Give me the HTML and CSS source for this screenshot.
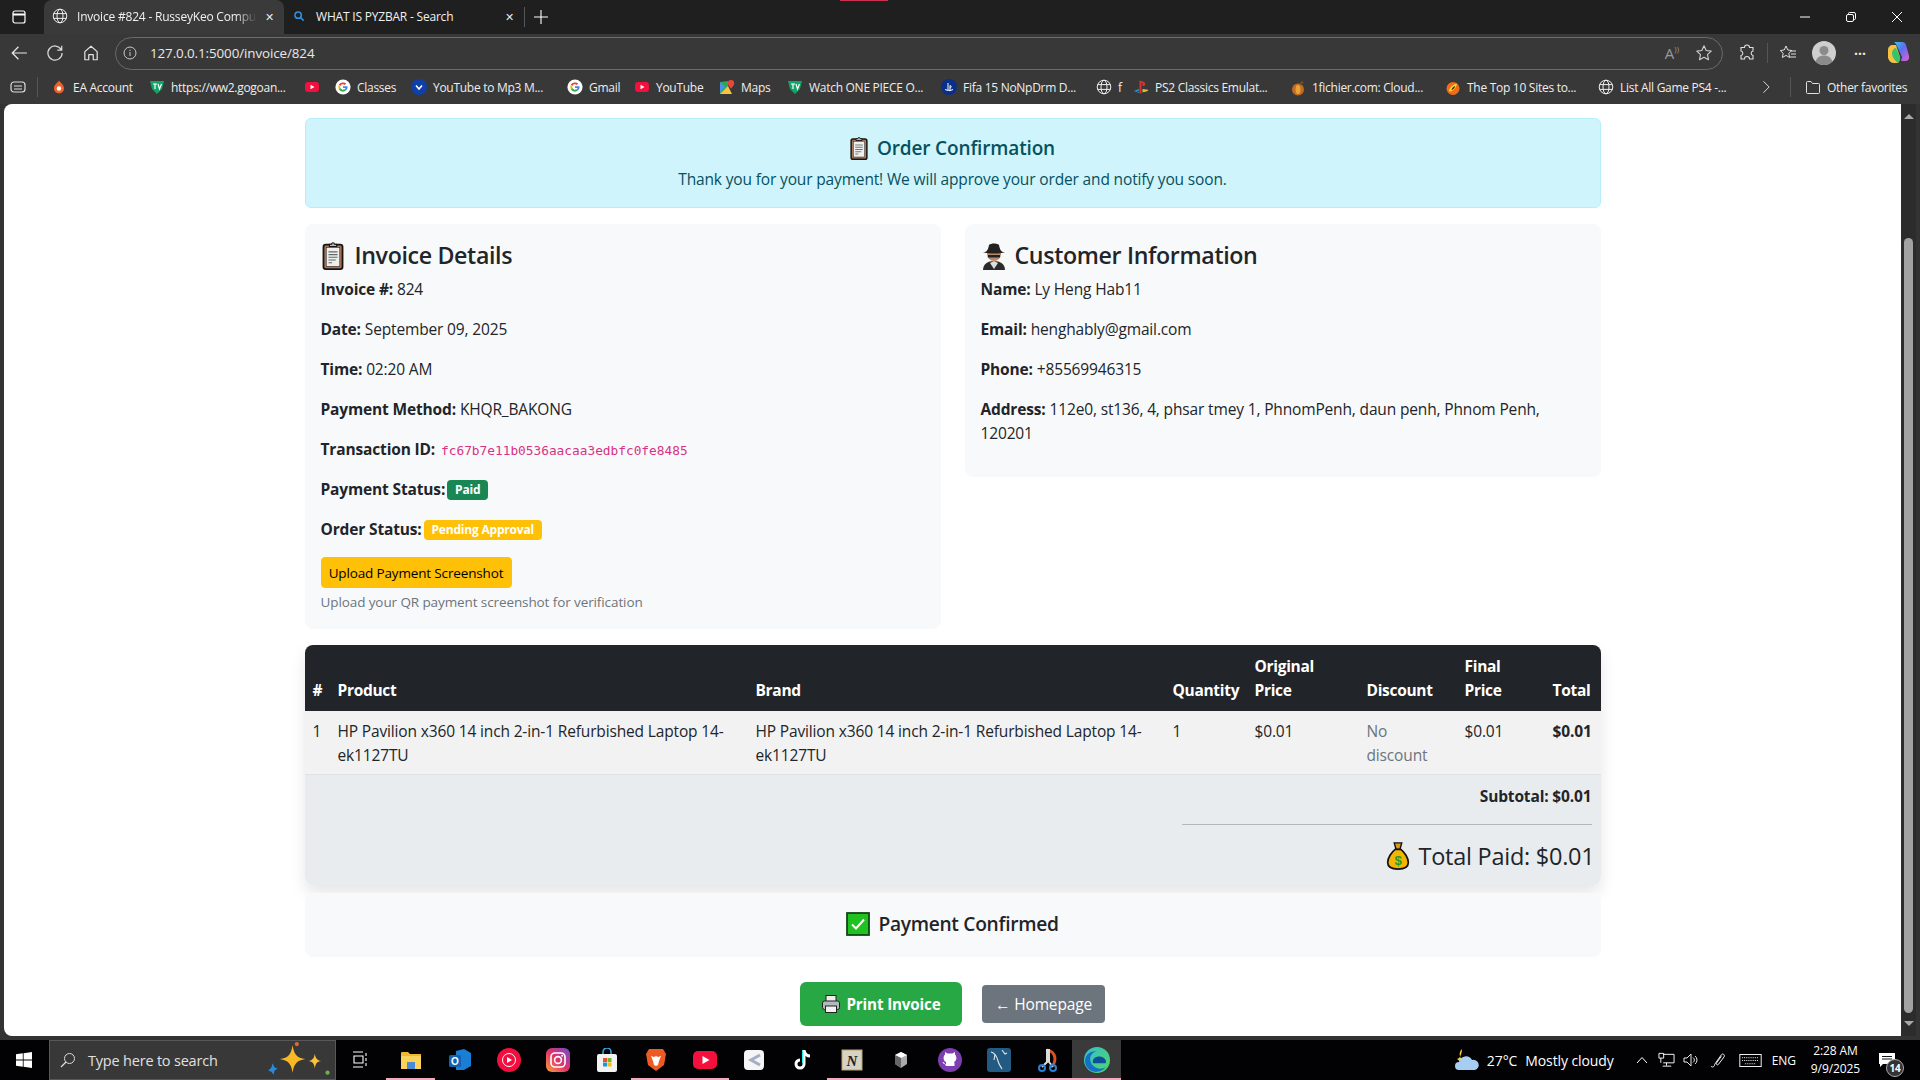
FILE: index.html
```html
<!DOCTYPE html>
<html lang="en">
<head>
    <meta charset="UTF-8">
    <title>Invoice #824 - RusseyKeo Computer</title>
    <link rel="stylesheet" href="styles.css">
</head>
<body>
<svg class="sprite" aria-hidden="true">
    <symbol id="globe" viewBox="0 0 16 16"><g fill="none" stroke="currentColor" stroke-width="1"><circle cx="8" cy="8" r="6.8"/><ellipse cx="8" cy="8" rx="3" ry="6.8"/><path d="M1.6 5.6h12.8M1.6 10.4h12.8"/></g></symbol>
    <symbol id="tv" viewBox="0 0 16 16"><path d="M1 2h14l-2 8-5 5-5-5z" fill="#12a56a"/><path d="M4 5h4M6 5v5M9 5l1.500 5L12.500 5" fill="none" stroke="#fff" stroke-width="1.200"/></symbol>
    <symbol id="yt" viewBox="0 0 16 16"><rect x="1" y="3" width="14" height="10" rx="3" fill="#f40f3d"/><path d="M6.5 5.8v4.4L10.5 8z" fill="#fff"/></symbol>
    <symbol id="goog" viewBox="0 0 16 16"><circle cx="8" cy="8" r="7.6" fill="#fff"/><path d="M8 3.400a4.600 4.600 0 0 1 3.200 1.200L9.800 6A2.700 2.700 0 0 0 5.400 7L3.800 5.800A4.600 4.600 0 0 1 8 3.400z" fill="#ea4335"/><path d="M3.800 5.800 5.400 7a2.800 2.800 0 0 0 0 2L3.800 10.200a4.600 4.600 0 0 1 0-4.400z" fill="#fbbc05"/><path d="M3.800 10.200 5.400 9a2.700 2.700 0 0 0 4 1.300l1.500 1.200A4.600 4.600 0 0 1 3.800 10.200z" fill="#34a853"/><path d="M12.600 7.200H8v1.800h2.600a2.300 2.300 0 0 1-1.200 1.300l1.500 1.200c1.100-1 1.900-2.500 1.700-4.300z" fill="#4285f4"/></symbol>
    <symbol id="clip" viewBox="0 0 24 32"><rect x="1.500" y="4" width="21" height="27" rx="2.500" fill="#a9785a" stroke="#1a1410" stroke-width="2"/><rect x="4.500" y="7" width="15" height="21" fill="#eef0f0" stroke="#1a1410" stroke-width=".6"/><path d="M7 12h10M7 15h10M7 18h10M7 21h8M7 24h4" stroke="#666" stroke-width="1.200"/><path d="M8 6V3.500h2.500a1.500 1.500 0 0 1 3 0H16V6z" fill="#b8bcbf" stroke="#1a1410" stroke-width="1.200"/></symbol>
</svg>

<div class="screen">
    <div class="titlebar">
        <svg class="tab-actions" viewBox="0 0 16 16" width="16" height="16"><rect x="2" y="2" width="12" height="12" rx="2" fill="none" stroke="#fff" stroke-width="1.200"/><path d="M2 5.500h12" stroke="#fff" stroke-width="2"/></svg>
        <div class="tab tab-active">
            <svg class="tab-icon" width="16" height="16"><use href="#globe"/></svg>
            <span class="tab-title">Invoice #824 - RusseyKeo Compu</span>
            <span class="tab-close">✕</span>
        </div>
        <div class="tab">
            <svg class="tab-icon" viewBox="0 0 16 16" width="14" height="14"><circle cx="7" cy="7" r="3.600" fill="none" stroke="#2f8fe0" stroke-width="1.800"/><path d="M9.800 9.800l3.500 3.500" stroke="#2f8fe0" stroke-width="1.800"/></svg>
            <span class="tab-title">WHAT IS PYZBAR - Search</span>
            <span class="tab-close">✕</span>
        </div>
        <span class="tab-sep"></span>
        <svg class="new-tab" viewBox="0 0 16 16" width="16" height="16"><path d="M8 1v14M1 8h14" stroke="#fff" stroke-width="1.100"/></svg>
        <div class="recording"></div>
        <div class="window-btns">
            <svg viewBox="0 0 12 12" width="12" height="12"><path d="M1 6h10" stroke="#fff"/></svg>
            <svg viewBox="0 0 12 12" width="12" height="12"><rect x="1.500" y="3.500" width="7" height="7" rx="1.500" fill="none" stroke="#fff"/><path d="M3.500 3.500V2.500a1 1 0 0 1 1-1h4.500a1.500 1.500 0 0 1 1.500 1.500v4.500a1 1 0 0 1-1 1h-1" fill="none" stroke="#fff"/></svg>
            <svg viewBox="0 0 12 12" width="12" height="12"><path d="M1 1l10 10M11 1L1 11" stroke="#fff"/></svg>
        </div>
    </div>

    <div class="toolbar">
        <svg class="tool" viewBox="0 0 16 16" width="18" height="18"><path d="M15 8H2M7.500 2.500 2 8l5.500 5.500" fill="none" stroke="#e8e8e8" stroke-width="1.100"/></svg>
        <svg class="tool" viewBox="0 0 16 16" width="18" height="18"><path d="M13.500 5A6.300 6.300 0 1 0 14.300 8M14 1.500V5.500h-4" fill="none" stroke="#d8d8d8" stroke-width="1.100"/></svg>
        <svg class="tool" viewBox="0 0 16 16" width="18" height="18"><path d="M2.500 14V6.800L8 2l5.500 4.800V14H10V9.500H6V14z" fill="none" stroke="#e0e0e0" stroke-width="1.100" stroke-linejoin="round"/></svg>
        <div class="address">
            <svg viewBox="0 0 14 14" width="14" height="14"><circle cx="7" cy="7" r="6" fill="none" stroke="#c8c8c8"/><path d="M7 6v4M7 3.800v1.200" stroke="#c8c8c8"/></svg>
            <span class="url">127.0.0.1:5000/invoice/824</span>
            <span class="address-right">
                <span class="read-aloud">A<small>))</small></span>
                <svg viewBox="0 0 18 18" width="18" height="18"><path d="M9 1.800l2.200 4.700 5 .6-3.700 3.500 1 5.100L9 13.200l-4.500 2.500 1-5.100L1.800 7.100l5-.6z" fill="none" stroke="#cfcfcf" stroke-width="1.100" stroke-linejoin="round"/></svg>
            </span>
        </div>
        <svg class="tool-ext" viewBox="0 0 18 18" width="18" height="18"><path d="M6.500 3.500a2.500 2.500 0 0 1 5 0H15v3.500a2.300 2.300 0 0 0 0 4.500V15h-3.500a2.500 2.500 0 0 0-5 0H3v-3.500a2.300 2.300 0 0 0 0-4.500V3.500z" fill="none" stroke="#e0e0e0" stroke-width="1.100"/></svg>
        <span class="tool-sep"></span>
        <svg class="tool-fav" viewBox="0 0 18 18" width="18" height="18"><path d="M7 2l1.800 4 4 .5-3 2.800.8 4.200L7 11.400 3.400 13.500l.8-4.200-3-2.800 4-.5zM12 7h5M12 10h5M11 13h6" fill="none" stroke="#e0e0e0" stroke-width="1"/></svg>
        <svg class="avatar" viewBox="0 0 24 24" width="24" height="24"><circle cx="12" cy="12" r="12" fill="#cfcfcf"/><circle cx="12" cy="9.500" r="4.500" fill="#8b8b8b"/><path d="M3.500 20.500c1.500-4.500 5-6 8.500-6s7 1.500 8.500 6A12 12 0 0 1 3.500 20.500z" fill="#8b8b8b"/></svg>
        <span class="more">···</span>
        <svg class="copilot" viewBox="0 0 24 24" width="24" height="24"><defs><linearGradient id="cop" x1="0" y1="0" x2="1" y2="1"><stop offset="0" stop-color="#36c5e8"/><stop offset=".45" stop-color="#5b6ff0"/><stop offset="1" stop-color="#e85fd0"/></linearGradient></defs><path d="M8 1h8c2 0 3.500 1 4 3l3 11c.5 3-1 5-4 5h-4l1-4-6-13z" fill="url(#cop)"/><path d="M2 9c0-3 2-5 5-5h3l4 12c.5 2-.5 4-2 6H8c-3 0-5-2-6-5z" fill="#f5c242"/><path d="M6 12c0-3 2-5 4-5l4 9c.5 2-.5 4-2 6-3-2-6-6-6-10z" fill="#35c46b"/></svg>
    </div>

    <div class="bookmarks">
        <svg class="bm-collapse" viewBox="0 0 16 16" width="16" height="16"><rect x="1" y="3" width="14" height="10" rx="3" fill="none" stroke="#ddd" stroke-width="1.200"/><path d="M4 7h8M4 10h8" stroke="#ddd"/></svg>
        <span class="bm-sep"></span>
        <span class="bm bm-ea"><svg viewBox="0 0 16 16" width="16" height="17"><path d="M8 1c1 2 5 4 5 8a5 5 0 0 1-10 0c0-4 4-6 5-8z" fill="#f0622a"/><circle cx="8" cy="9" r="2.200" fill="#fff"/></svg>EA Account</span>
        <span class="bm bm-tv"><svg width="16" height="16"><use href="#tv"/></svg>https://ww2.gogoan...</span>
        <span class="bm bm-yt1"><svg width="16" height="16"><use href="#yt"/></svg></span>
        <span class="bm bm-classes"><svg width="16" height="16"><use href="#goog"/></svg>Classes</span>
        <span class="bm bm-mp3"><svg viewBox="0 0 16 16" width="16" height="16"><circle cx="8" cy="8" r="8" fill="#0f3fa8"/><path d="M5 6.500l3 3.500 3-3.500" fill="none" stroke="#fff" stroke-width="1.600"/></svg>YouTube to Mp3 M...</span>
        <span class="bm bm-gmail"><svg width="16" height="16"><use href="#goog"/></svg>Gmail</span>
        <span class="bm bm-yt2"><svg width="16" height="16"><use href="#yt"/></svg>YouTube</span>
        <span class="bm bm-maps"><svg viewBox="0 0 16 16" width="16" height="16"><path d="M1 3l8-1v13l-8 0z" fill="#2fa853"/><path d="M1 15l8-8 4 8z" fill="#f6c343"/><path d="M1 3l5 5-5 5z" fill="#4d90f0"/><path d="M12 1a3.200 3.200 0 0 1 3.200 3.200c0 2.300-3.200 5.300-3.200 5.300S8.800 6.500 8.800 4.200A3.200 3.200 0 0 1 12 1z" fill="#e5493a"/></svg>Maps</span>
        <span class="bm bm-onepiece"><svg width="16" height="16"><use href="#tv"/></svg>Watch ONE PIECE O...</span>
        <span class="bm bm-fifa"><svg viewBox="0 0 16 16" width="16" height="16"><circle cx="8" cy="8" r="8" fill="#0a2f8a"/><path d="M7 4v7l2 .8V6.500c1.500 0 1.500 2.500 0 2.300M4 10.500l3 1M12 10.500l-3 1" fill="none" stroke="#fff"/></svg>Fifa 15 NoNpDrm D...</span>
        <span class="bm bm-f"><svg width="16" height="16"><use href="#globe"/></svg>f</span>
        <span class="bm bm-ps2"><svg viewBox="0 0 16 16" width="16" height="16"><path d="M6.500 1.500l4 1.200c2.500.8 2.500 5-1 4.300V4L8.500 3.700v11l-2-.7z" fill="#d8352b"/><path d="M1 12l5-2v1.500l-3 1 3 .5v1z" fill="#2e9bd8"/><path d="M9.500 10l5.500.8c.8.8-1 2-5.500 2.500z" fill="#e8b931"/></svg>PS2 Classics Emulat...</span>
        <span class="bm bm-1f"><svg viewBox="0 0 16 16" width="16" height="17"><ellipse cx="8" cy="10" rx="6" ry="6" fill="#c56a1f"/><ellipse cx="8" cy="10" rx="2.500" ry="4.500" fill="#e9a23a"/><path d="M10 5l3-3" stroke="#7a4a20" stroke-width="2"/></svg>1fichier.com: Cloud...</span>
        <span class="bm bm-top10"><svg viewBox="0 0 16 16" width="16" height="17"><circle cx="8" cy="9" r="6.500" fill="#ef6c1a"/><path d="M4 12c0-4 4-7 8-8-1 4-3 8-8 8z" fill="#ffd22e"/><path d="M6.500 10.500c.5-2 2-3.500 3.500-4-.3 2-1.500 3.500-3.500 4z" fill="#3a2500"/></svg>The Top 10 Sites to...</span>
        <span class="bm bm-ps4"><svg width="16" height="16"><use href="#globe"/></svg>List All Game PS4 -...</span>
        <svg class="bm-chevron" viewBox="0 0 10 16" width="9" height="14"><path d="M1.500 1.500 8 8l-6.500 6.500" fill="none" stroke="#ddd" stroke-width="1.100"/></svg>
        <span class="bm-sep bm-sep-right"></span>
        <span class="bm bm-other"><svg viewBox="0 0 16 16" width="16" height="16"><path d="M1.500 13.500V3.500a1 1 0 0 1 1-1h3.500l1.500 2h6a1 1 0 0 1 1 1v8a1 1 0 0 1-1 1h-11a1 1 0 0 1-1-1z" fill="none" stroke="#e0e0e0"/></svg>Other favorites</span>
    </div>

    <div class="viewport">
        <main class="page">
            <div class="container">
                <div class="alert">
                    <h5 class="alert-title"><svg class="emoji-sm" width="18" height="24"><use href="#clip"/></svg> Order Confirmation</h5>
                    <p>Thank you for your payment! We will approve your order and notify you soon.</p>
                </div>

                <div class="info-row">
                    <section class="card">
                        <h4 class="h-invoice"><svg class="emoji" width="24" height="29"><use href="#clip"/></svg> Invoice Details</h4>
                        <p><b>Invoice #:</b> 824</p>
                        <p><b>Date:</b> September 09, 2025</p>
                        <p><b>Time:</b> 02:20 AM</p>
                        <p><b>Payment Method:</b> KHQR_BAKONG</p>
                        <p><b>Transaction ID:</b> <code>fc67b7e11b0536aacaa3edbfc0fe8485</code></p>
                        <p><b>Payment Status:</b> <span class="badge badge-paid">Paid</span></p>
                        <p><b>Order Status:</b> <span class="badge badge-pending">Pending Approval</span></p>
                        <button class="btn-upload">Upload Payment Screenshot</button>
                        <div class="form-text">Upload your QR payment screenshot for verification</div>
                    </section>
                    <section class="card card-customer">
                        <h4><svg class="emoji" viewBox="0 0 26 28" width="26" height="28"><path d="M2 28c0-6 5-9 11-9s11 3 11 9z" fill="#2b2b2b"/><path d="M13 19l-4 2 4 6 4-6z" fill="#ddd"/><circle cx="13" cy="12" r="7" fill="#b98a6a"/><path d="M2 10c3 .5 5-1 6-7 2-2 8-2 10 0 1 6 3 7.500 6 7-5 2-17 2-22 0z" fill="#222"/><path d="M7 13h12v2.500H7z" fill="#222"/></svg> Customer Information</h4>
                        <p><b>Name:</b> Ly Heng Hab11</p>
                        <p><b>Email:</b> henghably@gmail.com</p>
                        <p><b>Phone:</b> +85569946315</p>
                        <p><b>Address:</b> <span>112e0, st136, 4, phsar tmey 1, PhnomPenh, daun penh, Phnom Penh,</span><br><span>120201</span></p>
                    </section>
                </div>

                <div class="table-wrap">
                    <table class="items">
                        <colgroup>
                            <col class="c-num"><col class="c-product"><col class="c-brand"><col class="c-qty"><col class="c-orig"><col class="c-disc"><col class="c-final"><col class="c-total">
                        </colgroup>
                        <thead>
                            <tr>
                                <th>#</th><th>Product</th><th>Brand</th><th>Quantity</th><th>Original<br>Price</th><th>Discount</th><th>Final<br>Price</th><th>Total</th>
                            </tr>
                        </thead>
                        <tbody>
                            <tr>
                                <td>1</td>
                                <td>HP Pavilion x360 14 inch 2-in-1 Refurbished Laptop 14-ek1127TU</td>
                                <td>HP Pavilion x360 14 inch 2-in-1 Refurbished Laptop 14-ek1127TU</td>
                                <td>1</td>
                                <td>$0.01</td>
                                <td class="muted">No<br>discount</td>
                                <td>$0.01</td>
                                <td><b>$0.01</b></td>
                            </tr>
                        </tbody>
                    </table>
                    <div class="totals">
                        <div class="subtotal">Subtotal: $0.01</div>
                        <hr class="totals-line">
                        <div class="total-paid"><svg class="emoji-bag" viewBox="0 0 24 32" width="24" height="30"><path d="M8 2h8l-2 7h-4z" fill="#d99a1c" stroke="#111" stroke-width="1.500"/><path d="M9 9h6c4 3 8 9 8 14 0 5-5 7-11 7S1 28 1 23C1 18 5 12 9 9z" fill="#f4b400" stroke="#111" stroke-width="1.800"/><text x="12" y="26" font-size="14" font-family="Liberation Sans" font-weight="700" fill="#1f9a3a" text-anchor="middle">$</text></svg> Total Paid: $0.01</div>
                    </div>
                </div>

                <div class="confirmed">
                    <svg viewBox="0 0 24 24" width="24" height="24"><rect x="1" y="1" width="22" height="22" fill="#1fc21f" stroke="#12451a" stroke-width="1.800"/><path d="M6 12.500l4 4 8-9" fill="none" stroke="#fff" stroke-width="2"/></svg>
                    <span>Payment Confirmed</span>
                </div>

                <div class="actions">
                    <button class="btn-print"><svg viewBox="0 0 20 20" width="20" height="20"><rect x="5" y="1.500" width="10" height="6" fill="#eee" stroke="#222"/><rect x="1.500" y="7" width="17" height="8.500" rx="2" fill="#b5b9bc" stroke="#222"/><rect x="4.500" y="12" width="11" height="6.500" fill="#f1f1f1" stroke="#222"/></svg> Print Invoice</button>
                    <button class="btn-home">← Homepage</button>
                </div>
            </div>
        </main>
        <div class="scrollbar">
            <span class="scroll-up"></span>
            <span class="scroll-thumb"></span>
            <span class="scroll-down"></span>
        </div>
    </div>

    <footer class="taskbar">
        <svg class="start" viewBox="0 0 16 16" width="16" height="16"><path d="M0 2.300 6.800 1.300v6.300H0zM7.600 1.200 16 0v7.600H7.600zM0 8.400h6.800v6.300L0 13.700zM7.600 8.400H16V16l-8.400-1.200z" fill="#fff"/></svg>
        <div class="search">
            <svg viewBox="0 0 16 16" width="16" height="16"><circle cx="9.500" cy="6.500" r="5" fill="none" stroke="#ddd"/><path d="M6 10 1 15" stroke="#ddd" stroke-width="1.200"/></svg>
            <span class="search-text">Type here to search</span>
            <svg class="sparkles" viewBox="0 0 62 34" width="66" height="36"><path d="M24 3c1.500 9 4 12 12 13-8 1.500-10.500 4-12 13-1.500-9-4-11.500-12-13 8-1 10.500-4 12-13z" fill="#f9b825"/><path d="M45 11c.8 4.500 2 6 6 7-4 .8-5.200 2-6 7-.8-5-2-6.200-6-7 4-1 5.200-2.500 6-7z" fill="#f9c23c"/><circle cx="28" cy="2" r="2" fill="#d96b3a"/><path d="M5 20l2 4 3 1-3 2-1 4-2-3-3-1 3-3z" fill="#2c8ad6"/><circle cx="57" cy="29" r="2" fill="#6fb24a"/></svg>
        </div>
        <svg class="task-view" viewBox="0 0 18 18" width="18" height="18"><path d="M2 1h10M2 16h10M3 5h9v7H3zM15 2v3M15 7v3M15 12v3" fill="none" stroke="#fff" stroke-width="1.100"/></svg>
        <div class="task-apps">
            <span class="app app-open"><svg viewBox="0 0 24 24" width="24" height="24"><path d="M2 5a1 1 0 0 1 1-1h6l2 2h11v3H2z" fill="#f2b632"/><path d="M2 8h20v13H2z" fill="#fbd35b"/><path d="M8 14h8v7H8z" fill="#4a8bd6"/></svg></span>
            <span class="app"><svg viewBox="0 0 24 24" width="24" height="24"><path d="M8 3l8-2 7 4v13l-7 4H8z" fill="#1a7fd4"/><rect x="1" y="7" width="12" height="12" rx="1.500" fill="#0f64b5"/><text x="7" y="17" font-size="10" font-family="Liberation Sans" font-weight="700" fill="#fff" text-anchor="middle">O</text></svg></span>
            <span class="app"><svg viewBox="0 0 24 24" width="24" height="24"><circle cx="12" cy="12" r="12" fill="#f20f3f"/><circle cx="12" cy="12" r="6.500" fill="none" stroke="#fff"/><path d="M10 9v6l5-3z" fill="#fff"/></svg></span>
            <span class="app"><svg viewBox="0 0 24 24" width="24" height="24"><defs><linearGradient id="ig" x1="0" y1="1" x2="1" y2="0"><stop offset="0" stop-color="#f9a13a"/><stop offset=".5" stop-color="#e1306c"/><stop offset="1" stop-color="#6a4fd0"/></linearGradient></defs><rect width="24" height="24" rx="6" fill="url(#ig)"/><rect x="5" y="5" width="14" height="14" rx="4" fill="none" stroke="#fff" stroke-width="1.600"/><circle cx="12" cy="12" r="3.400" fill="none" stroke="#fff" stroke-width="1.600"/><circle cx="16.200" cy="7.800" r="1" fill="#fff"/></svg></span>
            <span class="app"><svg viewBox="0 0 24 24" width="24" height="24"><path d="M8 6V4a4 4 0 0 1 8 0v2" fill="none" stroke="#2ea4dc" stroke-width="1.600"/><rect x="2" y="6" width="20" height="18" rx="2" fill="#f2f2f2"/><rect x="8" y="10" width="4" height="4" fill="#e8532c"/><rect x="12.500" y="10" width="4" height="4" fill="#6eb52d"/><rect x="8" y="14.500" width="4" height="4" fill="#1e96dc"/><rect x="12.500" y="14.500" width="4" height="4" fill="#f8b80d"/></svg></span>
            <span class="app app-open"><svg viewBox="0 0 24 24" width="24" height="24"><path d="M5 1h14l3 5-2 11-8 6-8-6L2 6z" fill="#ee5a24"/><path d="M7 8l3 1 2-1 2 1 3-1-2 5-1 4-2 1-2-1-1-4z" fill="#fff"/></svg></span>
            <span class="app app-open"><svg viewBox="0 0 24 24" width="24" height="24"><rect y="3" width="24" height="18" rx="5" fill="#f40f3d"/><path d="M9.500 8v8l7-4z" fill="#fff"/></svg></span>
            <span class="app"><svg viewBox="0 0 24 24" width="24" height="24"><rect x="2" y="2" width="20" height="20" rx="4" fill="#f5f5f5"/><path d="M18 7l-9 5 9 5" fill="none" stroke="#a4adc4" stroke-width="3"/></svg></span>
            <span class="app"><svg viewBox="0 0 24 24" width="24" height="24"><path d="M13 2v14a4 4 0 1 1-4-4" fill="none" stroke="#fff" stroke-width="3"/><path d="M13 3c1 3 3 5 6 5" fill="none" stroke="#fff" stroke-width="3"/><path d="M11.500 2v13" stroke="#25f4ee"/></svg></span>
            <span class="app app-open"><svg viewBox="0 0 24 24" width="24" height="24"><rect x="2" y="2" width="20" height="20" fill="#d7d3c4" stroke="#b9a56c"/><text x="12" y="18" font-size="15" font-family="Liberation Serif" font-weight="700" font-style="italic" fill="#222" text-anchor="middle">N</text></svg></span>
            <span class="app app-open"><svg viewBox="0 0 24 24" width="24" height="24"><path d="M12 4l6 3v9l-6 4-6-4V7z" fill="#aaa"/><path d="M6 7l6 3 6-3-6-3z" fill="#fff"/><path d="M12 10v10l-6-4V7z" fill="#666"/></svg></span>
            <span class="app app-open"><svg viewBox="0 0 24 24" width="24" height="24"><circle cx="12" cy="12" r="12" fill="#7d3fb0"/><path d="M8 18v-2c-2 .5-3-.5-3.500-2 1 0 1.500.5 2 1M8 14c-3-1-3-6-1-7.500V4l2.500 1.500h5L17 4v2.500c2 1.500 2 6.500-1 7.500l.5 1v3h-8.500z" fill="#fff"/></svg></span>
            <span class="app app-open"><svg viewBox="0 0 24 24" width="24" height="24"><rect width="24" height="24" rx="3" fill="#235a82"/><path d="M4 4c4 1 6 5 7 9s3 6 4 8M8 6l-1 6M15 2l3 4 2-1" fill="none" stroke="#dfe8ee" stroke-width="1.100"/></svg></span>
            <span class="app app-open"><svg viewBox="0 0 24 24" width="24" height="24"><path d="M11 2a9 9 0 0 1 3 17" fill="none" stroke="#d9531e" stroke-width="3"/><path d="M11 1v13l-5 5M13 1v13l4 5" fill="none" stroke="#ddd" stroke-width="2"/><circle cx="6" cy="20" r="3" fill="none" stroke="#2a7fd4" stroke-width="2"/><circle cx="17" cy="20" r="3" fill="none" stroke="#2a7fd4" stroke-width="2"/></svg></span>
            <span class="app app-open app-current"><svg viewBox="0 0 24 24" width="26" height="26"><defs><linearGradient id="edge" x1="0" y1="0" x2="1" y2="1"><stop offset="0" stop-color="#35c1c9"/><stop offset="1" stop-color="#52d467"/></linearGradient></defs><circle cx="12" cy="12" r="12" fill="url(#edge)"/><path d="M1 13C1 6 7 3 12 4c-5 1-7 5-6 9 1 5 7 9 14 6-3 3-6 4-9 4C5 23 1 18 1 13z" fill="#1270c7"/><path d="M8 14c0-4 4-6 8-5 3 1 5 3 4 6H11c-1 0-3 0-3-1z" fill="#0e4f9c"/></svg></span>
        </div>
        <div class="tray">
            <svg class="weather" viewBox="0 0 26 24" width="26" height="24"><path d="M8 1a7 7 0 0 0 3 12 7 7 0 0 1-8-2C5 11 8 7 8 1z" fill="#f4c63c"/><path d="M5 22a4 4 0 0 1 0-8 7 7 0 0 1 13-2 5 5 0 0 1 3 10z" fill="#a8cdf2"/></svg>
            <span class="temp">27°C</span>
            <span class="sky">Mostly cloudy</span>
            <svg class="tray-chevron" viewBox="0 0 12 8" width="12" height="8"><path d="M1 7l5-5.500L11 7" fill="none" stroke="#fff"/></svg>
            <svg class="tray-net" viewBox="0 0 18 16" width="17" height="16"><path d="M5.500 2H17v9H5.500M1 1h5v5H1zM3 6v5M9 11v3M5 14.500h9" fill="none" stroke="#fff"/></svg>
            <svg class="tray-vol" viewBox="0 0 16 16" width="16" height="16"><path d="M1 6h3l4-4v12L4 10H1zM10 5.500a3 3 0 0 1 0 5M12 4a5 5 0 0 1 0 8" fill="none" stroke="#e8e8e8"/></svg>
            <svg class="tray-pen" viewBox="0 0 18 18" width="17" height="17"><path d="M1 15c2 2 4 0 4-2l7-10c1.500-2 4 0 3 2l-6 8c-1 1.500-3 0-2-1.500l5-7" fill="none" stroke="#fff"/></svg>
            <svg class="tray-kbd" viewBox="0 0 24 14" width="23" height="13"><rect x=".5" y=".5" width="23" height="13" fill="none" stroke="#fff"/><path d="M3 4h18M3 7h18M6 10.500h12" stroke="#fff" stroke-dasharray="1 1"/></svg>
            <span class="lang">ENG</span>
            <div class="clock">
                <span>2:28 AM</span>
                <span>9/9/2025</span>
            </div>
            <div class="notify">
                <svg viewBox="0 0 16 14" width="16" height="14"><path d="M0 0h16v11H4l-3 3v-3H0z" fill="#fff"/><path d="M3 3.500h10M3 6h10" stroke="#111"/></svg>
                <span class="notify-count">14</span>
            </div>
        </div>
    </footer>
</div>
</body>
</html>
```

FILE: styles.css
```css
* {
    box-sizing: border-box;
}

html, body {
    margin: 0;
    height: 100%;
    overflow: hidden;
}

body {
    font-family: "Open Sans", "Noto Sans", "Liberation Sans", sans-serif;
    background: #333;
}

.sprite {
    width: 0;
    height: 0;
    display: block;
}

.screen {
    width: 1920px;
    height: 1080px;
    display: flex;
    flex-direction: column;
    overflow: hidden;
}

/* browser title bar */
.titlebar {
    height: 34px;
    background: #1f1f1f;
    display: flex;
    align-items: center;
    color: #fff;
    font-size: 12px;
    letter-spacing: -0.2px;
    flex-shrink: 0;
}

.tab-actions {
    margin: 0 17px 0 11px;
}

.tab {
    width: 240px;
    height: 34px;
    display: flex;
    align-items: center;
    padding: 0 10px 2px 6px;
    color: #f0f0f0;
}

.tab-active {
    background: #3a3a3a;
    border-radius: 8px 8px 0 0;
}

.tab-icon {
    color: #eee;
    margin-right: 9px;
    margin-left: 2px;
    flex-shrink: 0;
}

.tab + .tab .tab-icon {
    margin-right: 10px;
}

.tab-title {
    flex: 1;
    white-space: nowrap;
}

.tab-active .tab-title {
    -webkit-mask-image: linear-gradient(90deg, #000 88%, transparent);
    mask-image: linear-gradient(90deg, #000 88%, transparent);
}

.tab-close {
    font-size: 11px;
    margin-left: 8px;
    color: #e8e8e8;
}

.tab-sep {
    width: 1px;
    height: 20px;
    background: #555;
}

.new-tab {
    margin-left: 8px;
}

.recording {
    width: 48px;
    height: 1px;
    background: #c8314f;
    align-self: flex-start;
    margin-left: 291px;
}

.window-btns {
    margin-left: auto;
    display: flex;
    align-items: center;
    gap: 34px;
    padding-right: 17px;
}

/* address row */
.toolbar {
    height: 38px;
    background: #383838;
    display: flex;
    align-items: center;
    padding-left: 10px;
    flex-shrink: 0;
}

.tool {
    margin-right: 18px;
}

.tool:nth-child(3) {
    margin-right: 15px;
}

.address {
    width: 1608px;
    height: 33px;
    border: 1px solid #6b6b6b;
    border-radius: 17px;
    display: flex;
    align-items: center;
    padding-left: 7px;
    color: #e8e8e8;
    flex-shrink: 0;
}

.url {
    font-size: 13.4px;
    letter-spacing: -0.1px;
    margin-left: 13px;
}

.address-right {
    margin-left: auto;
    display: flex;
    align-items: center;
    gap: 16px;
    padding-right: 9px;
}

.read-aloud {
    color: #9a9a9a;
    font-size: 15px;
}

.read-aloud small {
    font-size: 8px;
    vertical-align: top;
}

.tool-ext {
    margin-left: 15px;
}

.tool-sep {
    width: 1px;
    height: 20px;
    background: #555;
    margin: 0 11px;
}

.avatar {
    margin-left: 15px;
}

.more {
    color: #e8e8e8;
    font-size: 14px;
    font-weight: 700;
    margin-left: 18px;
}

.copilot {
    margin-left: 20px;
}

/* bookmarks bar */
.bookmarks {
    height: 32px;
    background: #383838;
    display: flex;
    align-items: center;
    color: #eee;
    font-size: 12px;
    letter-spacing: -0.28px;
    padding: 0 0 2px 10px;
    flex-shrink: 0;
}

.bm {
    display: flex;
    align-items: center;
    gap: 6px;
    white-space: nowrap;
    flex-shrink: 0;
}

.bm-sep {
    width: 1px;
    height: 20px;
    background: #555;
    margin: 0 12px 0 11px;
}

.bm-ea { width: 98px; margin-left: 1px; }
.bm-tv { width: 155px; }
.bm-yt1 { width: 31px; }
.bm-classes { width: 76px; }
.bm-mp3 { width: 156px; }
.bm-gmail { width: 67px; }
.bm-yt2 { width: 85px; }
.bm-maps { width: 68px; }
.bm-onepiece { width: 154px; }
.bm-fifa { width: 155px; }
.bm-f { width: 37px; }
.bm-ps2 { width: 157px; }
.bm-1f { width: 155px; }
.bm-top10 { width: 153px; }
.bm-ps4 { width: 162px; }
.bm-other { width: 110px; }

.bm svg {
    flex-shrink: 0;
}

.bm-chevron {
    margin-left: 2px;
    flex-shrink: 0;
}

.bm-sep-right {
    margin: 0 14px 0 19px;
}

/* page area */
.viewport {
    height: 936px;
    background: #333;
    display: flex;
    padding-left: 4px;
    flex-shrink: 0;
}

.page {
    width: 1897px;
    height: 932px;
    background: #fff;
    border-radius: 8px 0 0 8px;
    color: #212529;
    font-size: 15.5px;
    line-height: 24px;
    letter-spacing: -0.15px;
    overflow: hidden;
}

.container {
    width: 1296px;
    margin: 0 auto;
    padding-top: 14px;
}

.alert {
    background: #cff4fc;
    border: 1px solid #b6effb;
    border-radius: 6px;
    color: #055160;
    padding: 16px;
    text-align: center;
    height: 90px;
}

.alert p {
    margin: 0;
}

.alert-title {
    margin: 0 0 6px;
    font-size: 19px;
    line-height: 26px;
    font-weight: 600;
    display: flex;
    justify-content: center;
    align-items: center;
    gap: 9px;
}

.info-row {
    display: flex;
    gap: 24px;
    margin-top: 16px;
    align-items: flex-start;
}

.card {
    flex: 1;
    background: #f8f9fa;
    border-radius: 8px;
    padding: 16px;
}

.card h4 {
    margin: 0 0 6px;
    font-size: 23.2px;
    line-height: 31px;
    font-weight: 600;
    letter-spacing: -0.35px;
    display: flex;
    align-items: center;
    gap: 8px;
}

.card .h-invoice {
    gap: 10px;
}

.card p {
    margin: 0 0 16px;
}

.card b, .items b {
    font-weight: 700;
}

code {
    font-family: "DejaVu Sans Mono", "Liberation Mono", monospace;
    font-size: 12.8px;
    line-height: 1;
    letter-spacing: 0;
    color: #d63384;
    margin-left: 2px;
}

.badge {
    display: inline-block;
    color: #fff;
    font-size: 12px;
    font-weight: 700;
    line-height: 12px;
    padding: 4px 8px;
    border-radius: 4px;
    vertical-align: top;
    margin: 3px 0 0 -2px;
    letter-spacing: -0.2px;
}

.badge-paid {
    background: #198754;
}

.badge-pending {
    background: #ffc107;
}

.btn-upload {
    display: block;
    background: #ffc107;
    border: 1px solid #ffc107;
    border-radius: 4px;
    font-family: inherit;
    color: #000;
    font-size: 13.5px;
    letter-spacing: -0.15px;
    height: 31px;
    width: 191px;
    padding: 0;
}

.form-text {
    font-size: 13.5px;
    line-height: 21px;
    color: #6c757d;
    margin-top: 4px;
    letter-spacing: -0.1px;
}

.table-wrap {
    margin-top: 16px;
    border-radius: 8px;
    overflow: hidden;
    box-shadow: 0 8px 16px rgba(0, 0, 0, .1);
}

.items {
    width: 1296px;
    border-collapse: collapse;
    table-layout: fixed;
}

.c-num { width: 25px; }
.c-product { width: 418px; }
.c-brand { width: 417px; }
.c-qty { width: 82px; }
.c-orig { width: 112px; }
.c-disc { width: 98px; }
.c-final { width: 88px; }
.c-total { width: 56px; }

.items th {
    background: #212529;
    color: #fff;
    font-weight: 700;
    letter-spacing: -0.3px;
    text-align: left;
    vertical-align: bottom;
    padding: 9px 8px;
}

.items td {
    background: #f2f2f2;
    vertical-align: top;
    padding: 8px 8px 7px;
    border-bottom: 1px solid #dee2e6;
}

.muted {
    color: #6c757d;
}

.totals {
    background: #e9ecef;
    height: 110px;
    padding: 8px 9px 0 8px;
    text-align: right;
}

.subtotal {
    font-weight: 700;
    margin-top: 1px;
}

.totals-line {
    width: 410px;
    margin: 16px 0 16px auto;
    border: 0;
    border-top: 1px solid #b4b8bb;
}

.total-paid {
    font-size: 23.5px;
    font-weight: 500;
    line-height: 29px;
    letter-spacing: -0.25px;
    margin-right: -3px;
    display: flex;
    justify-content: flex-end;
    align-items: center;
    gap: 8px;
}

.confirmed {
    margin-top: 8px;
    height: 64px;
    padding-bottom: 2px;
    background: #f8f9fa;
    border-radius: 8px;
    display: flex;
    justify-content: center;
    align-items: center;
    gap: 8px;
    font-size: 19.2px;
    font-weight: 600;
    letter-spacing: -0.3px;
}

.actions {
    display: flex;
    justify-content: center;
    align-items: center;
    gap: 20px;
    margin-top: 25px;
}

.btn-print {
    width: 162px;
    height: 44px;
    background: #28a745;
    border: 0;
    border-radius: 6px;
    color: #fff;
    font-family: inherit;
    font-size: 15.2px;
    font-weight: 700;
    letter-spacing: -0.15px;
    display: flex;
    align-items: center;
    justify-content: center;
    gap: 5px;
}

.btn-home {
    width: 123px;
    height: 38px;
    background: #6c757d;
    border: 0;
    border-radius: 4px;
    color: #fff;
    font-family: inherit;
    font-size: 15.5px;
    letter-spacing: -0.15px;
    padding: 0;
}

/* scrollbar, the arrows are css triangles */
.scrollbar {
    width: 15px;
    height: 932px;
    background: #2c2c2c;
    display: flex;
    flex-direction: column;
    align-items: center;
}

.scroll-up {
    width: 0;
    height: 0;
    border: 5px solid transparent;
    border-top: 0;
    border-bottom: 5px solid #a8a8a8;
    margin-top: 10px;
}

.scroll-thumb {
    width: 9px;
    height: 775px;
    background: #a2a2a2;
    border-radius: 5px;
    margin-top: 119px;
}

.scroll-down {
    width: 0;
    height: 0;
    border: 5px solid transparent;
    border-bottom: 0;
    border-top: 5px solid #a8a8a8;
    margin-top: 8px;
}

/* windows taskbar */
.taskbar {
    height: 40px;
    background: #020204;
    color: #fff;
    display: flex;
    align-items: center;
    flex-shrink: 0;
}

.start {
    margin: 0 17px 0 16px;
}

.search {
    width: 287px;
    height: 40px;
    background: #383838;
    border: 1px solid #585858;
    display: flex;
    align-items: center;
    padding-left: 10px;
    color: #e0e0e0;
    font-size: 14.5px;
    letter-spacing: -0.2px;
}

.search-text {
    margin-left: 12px;
}

.sparkles {
    margin-left: auto;
    margin-right: 2px;
}

.task-view {
    margin-left: 15px;
    flex-shrink: 0;
}

.task-apps {
    display: flex;
    margin-left: 17px;
}

.app {
    width: 49px;
    height: 40px;
    display: flex;
    align-items: center;
    justify-content: center;
    flex-shrink: 0;
}

.app-open {
    box-shadow: inset 0 -2px 0 #f0a9bd;
}

.app-current {
    background: #3a3a3a;
}

.tray {
    margin-left: auto;
    display: flex;
    align-items: center;
    font-size: 14px;
    letter-spacing: -0.1px;
    padding-right: 17px;
}

.temp {
    margin-left: 7px;
}

.sky {
    margin-left: 8px;
}

.tray-chevron {
    margin-left: 22px;
}

.tray-net {
    margin-left: 10px;
}

.tray-vol {
    margin-left: 8px;
}

.tray-pen {
    margin-left: 11px;
}

.tray-kbd {
    margin-left: 12px;
}

.lang {
    font-size: 12px;
    margin-left: 10px;
}

.clock {
    display: flex;
    flex-direction: column;
    align-items: center;
    font-size: 12px;
    line-height: 18px;
    margin-left: 15px;
}

.notify {
    position: relative;
    width: 24px;
    height: 24px;
    margin-left: 19px;
    padding-top: 4px;
}

.notify-count {
    position: absolute;
    right: -1px;
    bottom: -5px;
    width: 18px;
    height: 18px;
    line-height: 16px;
    text-align: center;
    background: #333;
    border: 1px solid #aaa;
    border-radius: 50%;
    font-size: 10px;
    font-weight: 700;
}
```
